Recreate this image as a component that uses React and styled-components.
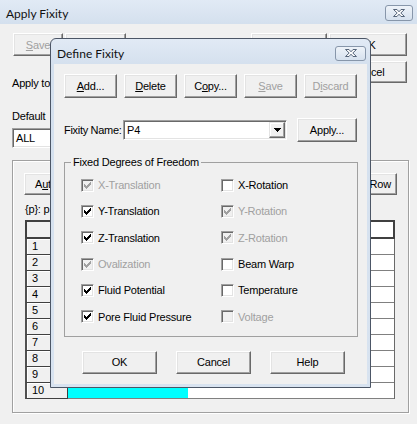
import React from "react";
import styled, { createGlobalStyle } from "styled-components";

const FONT = `"Liberation Sans", Arial, sans-serif`;
const TITLE_FONT = `Lato, "Open Sans", sans-serif`;

const Global = createGlobalStyle`
  html, body { margin: 0; padding: 0; }
  body {
    width: 417px; height: 424px; overflow: hidden;
    background: #f0f0f0;
    font-family: ${FONT};
    font-size: 11px;
    letter-spacing: -0.2px;
    color: #000;
  }
`;

const Desktop = styled.div`
  position: relative;
  width: 417px;
  height: 424px;
  overflow: hidden;
`;

const Window = styled.div`
  display: flex;
  flex-direction: column;
  width: 100%;
  height: 100%;
  background: #f0f0f0;
`;

const TitleBar = styled.div`
  box-sizing: border-box;
  height: ${p => p.$h}px;
  padding: ${p => p.$pt}px ${p => p.$pr}px 0 ${p => p.$pl}px;
  display: flex;
  align-items: center;
  background: ${p => (p.$clear ? "transparent" : "linear-gradient(#e1eaf5, #d4e0ee)")};
  flex: none;
`;

const TitleText = styled.span`
  font-family: ${TITLE_FONT};
  font-size: 12px;
  letter-spacing: 0;
  color: #111;
  flex: 1;
`;

const CloseBtn = styled.div`
  box-sizing: border-box;
  width: ${p => p.$w}px;
  height: ${p => p.$h}px;
  border: 1px solid #8796aa;
  border-radius: 3px;
  background: linear-gradient(#eef3f9, #d6e1ee);
  display: flex;
  align-items: center;
  justify-content: center;
  flex: none;
`;

const XGlyph = () => (
  <svg width="14" height="10" viewBox="0 0 14 10">
    <path
      d="M1.5 1.5h3.5l2 2.3 2-2.3h3.5l-3.7 3.5 3.7 3.5h-3.5l-2-2.3-2 2.3H1.5l3.7-3.5z"
      fill="#fff"
      stroke="#56657a"
      strokeWidth="1"
      strokeLinejoin="round"
    />
  </svg>
);

const Client = styled.div`
  flex: 1;
  display: flex;
  flex-direction: column;
  padding: 9px 10px 0 12px;
`;

const Top = styled.div`
  display: flex;
  gap: 2px;
`;

const LeftCol = styled.div`
  flex: 1;
  display: flex;
  flex-direction: column;
`;

const RightCol = styled.div`
  width: 78px;
  display: flex;
  flex-direction: column;
  gap: 5px;
`;

const Row = styled.div`
  display: flex;
  align-items: ${p => p.$align || "stretch"};
  gap: ${p => p.$gap || 0}px;
  margin-top: ${p => p.$mt || 0}px;
  padding-left: ${p => p.$pl || 0}px;
`;

const Spacer = styled.div`
  flex: 1;
`;

const Btn = styled.div`
  box-sizing: border-box;
  width: ${p => (p.$w ? `${p.$w}px` : "auto")};
  height: ${p => p.$h || 23}px;
  margin-left: ${p => p.$ml || 0}px;
  background: #f0f0f0;
  border: 1px solid;
  border-color: #fff #696969 #696969 #fff;
  box-shadow: inset -1px -1px 0 #a0a0a0, inset 1px 1px 0 #e3e3e3;
  font-family: ${FONT};
  font-size: 11px;
  color: ${p => (p.$off ? "#a0a0a0" : "#000")};
  display: flex;
  align-items: center;
  justify-content: center;
  flex: none;
  white-space: nowrap;
  overflow: hidden;
`;

const U = styled.span`
  text-decoration: underline;
  text-underline-offset: 1px;
`;

const Label = styled.div`
  line-height: 13px;
  margin-top: ${p => p.$mt || 0}px;
  white-space: nowrap;
`;

const Sunken = styled.div`
  box-sizing: border-box;
  width: ${p => p.$w}px;
  height: 20px;
  margin-top: ${p => p.$mt || 0}px;
  border: 1px solid;
  border-color: #a0a0a0 #fff #fff #a0a0a0;
  box-shadow: inset 1px 1px 0 #696969, inset -1px -1px 0 #e3e3e3;
  background: #fff;
  padding: 1px;
  display: flex;
  align-items: stretch;
  flex: none;
`;

const FieldText = styled.div`
  flex: 1;
  padding-left: 2px;
  display: flex;
  align-items: center;
  line-height: 13px;
`;

const ComboArrow = styled.div`
  box-sizing: border-box;
  width: 16px;
  border: 1px solid;
  border-color: #e3e3e3 #696969 #696969 #e3e3e3;
  box-shadow: inset -1px -1px 0 #a0a0a0, inset 1px 1px 0 #fff;
  background: #f0f0f0;
  display: flex;
  align-items: center;
  justify-content: center;
`;

const Group = styled.div`
  box-sizing: border-box;
  width: 397px;
  height: 253px;
  margin-top: 12px;
  border: 1px solid #a0a0a0;
  box-shadow: inset 1px 1px 0 #fff, 1px 1px 0 #fff;
  padding: 12px 11px 0 12px;
  display: flex;
  flex-direction: column;
`;

const Grid = styled.div`
  margin-top: 4px;
  width: 370px;
  display: flex;
  flex-direction: column;
`;

const GridHeader = styled.div`
  box-sizing: border-box;
  height: 19px;
  border: 2px solid #404040;
  display: flex;
`;

const HeadCorner = styled.div`
  width: 40px;
  background: #f0f0f0;
  border-right: 1px solid #808080;
`;

const HeadData = styled.div`
  flex: 1;
  background: #fff;
`;

const GridRow = styled.div`
  box-sizing: border-box;
  height: 16px;
  display: flex;
  border-right: 1px solid #696969;
`;

const RowHead = styled.div`
  box-sizing: border-box;
  width: 43px;
  border-left: 2px solid #505050;
  border-right: 1px solid #404040;
  border-bottom: 1px solid #404040;
  background: #f0f0f0;
  padding-left: 5px;
  line-height: 15px;
  box-shadow: inset 1px 1px 0 #fff;
`;

const Cell = styled.div`
  flex: 1;
  border-bottom: 1px solid #808080;
  background: #fff;
  display: flex;
`;

const Selected = styled.div`
  width: 120px;
  background: #00ffff;
`;

/* ---------- dialog ---------- */

const Dialog = styled.div`
  position: absolute;
  left: 50px;
  top: 38px;
  width: 321px;
  height: 350px;
  box-sizing: border-box;
  border: 1px solid #4c5666;
  border-radius: 6px 6px 0 0;
  background: linear-gradient(#e1eaf5, #d4e0ee 26px, #d8e3f0);
  padding: 0 3px 3px 3px;
  display: flex;
  flex-direction: column;
`;

const DlgClient = styled.div`
  flex: 1;
  background: #f0f0f0;
  padding: 10px 9px 0 10px;
  display: flex;
  flex-direction: column;
`;

const FieldSet = styled.fieldset`
  box-sizing: border-box;
  margin: 14px 0 0 0;
  padding: 0;
  width: 294px;
  border: 1px solid #a0a0a0;
  min-width: 0;
`;

const Legend = styled.legend`
  margin-left: 6px;
  padding: 0 2px;
  line-height: 13px;
  font-size: 11px;
`;

const CheckGrid = styled.div`
  display: grid;
  grid-template-columns: 140px 1fr;
  grid-auto-rows: 26.3px;
  padding: 3px 0 6px 16px;
`;

const CheckItem = styled.div`
  display: flex;
  align-items: center;
  gap: 4px;
  color: ${p => (p.$off ? "#a0a0a0" : "#000")};
  white-space: nowrap;
`;

const Box = styled.span`
  box-sizing: border-box;
  width: 13px;
  height: 13px;
  border: 1px solid;
  border-color: #a0a0a0 #fff #fff #a0a0a0;
  box-shadow: inset 1px 1px 0 #696969, inset -1px -1px 0 #e3e3e3;
  background: ${p => (p.$off ? "#f0f0f0" : "#fff")};
  display: flex;
  align-items: center;
  justify-content: center;
  flex: none;
`;

const CheckMark = ({ color }) => (
  <svg width="7" height="7" viewBox="0 0 7 7" shapeRendering="crispEdges">
    <path
      d="M0 2H1V3H2V4H3V3H4V2H5V1H6V0H7V3H6V4H5V5H4V6H3V7H2V6H1V5H0Z"
      fill={color}
    />
  </svg>
);

const Arrow = () => (
  <svg width="7" height="4" viewBox="0 0 7 4" shapeRendering="crispEdges">
    <path d="M0 0H7L3.5 4Z" fill="#000" />
  </svg>
);

const Check = ({ label, checked, off }) => (
  <CheckItem $off={off}>
    <Box $off={off}>{checked && <CheckMark color={off ? "#a0a0a0" : "#000"} />}</Box>
    <span>{label}</span>
  </CheckItem>
);

const NameLabel = styled.div`
  width: 59px;
  line-height: 13px;
  white-space: nowrap;
  letter-spacing: -0.3px;
  flex: none;
`;

const checks = [
  ["X-Translation", true, true],
  ["X-Rotation", false, false],
  ["Y-Translation", true, false],
  ["Y-Rotation", true, true],
  ["Z-Translation", true, false],
  ["Z-Rotation", true, true],
  ["Ovalization", true, true],
  ["Beam Warp", false, false],
  ["Fluid Potential", true, false],
  ["Temperature", false, false],
  ["Pore Fluid Pressure", true, false],
  ["Voltage", false, true],
];

const rows = [1, 2, 3, 4, 5, 6, 7, 8, 9, 10];

export default function App() {
  return (
    <>
      <Global />
      <Desktop>
        <Window>
          <TitleBar $h={24} $pt={2} $pl={6} $pr={4}>
            <TitleText>Apply Fixity</TitleText>
            <CloseBtn $w={28} $h={16}>
              <XGlyph />
            </CloseBtn>
          </TitleBar>
          <Client>
            <Top>
              <LeftCol>
                <Row $gap={2}>
                  <Btn $w={50} $ml={1} $off>
                    <U>S</U>ave
                  </Btn>
                  <Btn $w={61} />
                  <Spacer />
                  <Btn $w={76} />
                </Row>
                <Label $mt={21}>Apply to</Label>
                <Label $mt={20}>Default</Label>
                <Sunken $w={150} $mt={5}>
                  <FieldText>ALL</FieldText>
                </Sunken>
              </LeftCol>
              <RightCol>
                <Btn $w={78}>OK</Btn>
                <Btn $w={78} $h={22}>Cancel</Btn>
              </RightCol>
            </Top>
            <Group>
              <Row>
                <Btn $w={60} $h={22} $ml={-1}>
                  A<U>u</U>to Fill
                </Btn>
                <Spacer />
                <Btn $w={67} $h={22}>Delete Row</Btn>
              </Row>
              <Label $mt={8}>{"{p}: p"}</Label>
              <Grid>
                <GridHeader>
                  <HeadCorner />
                  <HeadData />
                </GridHeader>
                {rows.map(n => (
                  <GridRow key={n}>
                    <RowHead>{n}</RowHead>
                    <Cell>{n === 10 && <Selected />}</Cell>
                  </GridRow>
                ))}
              </Grid>
            </Group>
          </Client>
        </Window>

        <Dialog>
          <TitleBar $h={25} $pt={3} $pl={3} $pr={1} $clear>
            <TitleText>Define Fixity</TitleText>
            <CloseBtn $w={31} $h={15}>
              <XGlyph />
            </CloseBtn>
          </TitleBar>
          <DlgClient>
            <Row $gap={7}>
              <Btn $w={53} $h={24}>
                <U>A</U>dd...
              </Btn>
              <Btn $w={53} $h={24}>
                <U>D</U>elete
              </Btn>
              <Btn $w={53} $h={24}>
                C<U>o</U>py...
              </Btn>
              <Btn $w={53} $h={24} $off>
                <U>S</U>ave
              </Btn>
              <Btn $w={53} $h={24} $off>
                D<U>i</U>scard
              </Btn>
            </Row>
            <Row $mt={20} $align="center">
              <NameLabel>Fixity Name:</NameLabel>
              <Sunken $w={164}>
                <FieldText>P4</FieldText>
                <ComboArrow>
                  <Arrow />
                </ComboArrow>
              </Sunken>
              <Btn $w={60} $h={24} $ml={10}>
                Apply...
              </Btn>
            </Row>
            <FieldSet>
              <Legend>Fixed Degrees of Freedom</Legend>
              <CheckGrid>
                {checks.map(([label, checked, off]) => (
                  <Check key={label} label={label} checked={checked} off={off} />
                ))}
              </CheckGrid>
            </FieldSet>
            <Row $mt={14} $gap={19} $pl={18}>
              <Btn $w={75}>OK</Btn>
              <Btn $w={75}>Cancel</Btn>
              <Btn $w={75}>Help</Btn>
            </Row>
          </DlgClient>
        </Dialog>
      </Desktop>
    </>
  );
}
